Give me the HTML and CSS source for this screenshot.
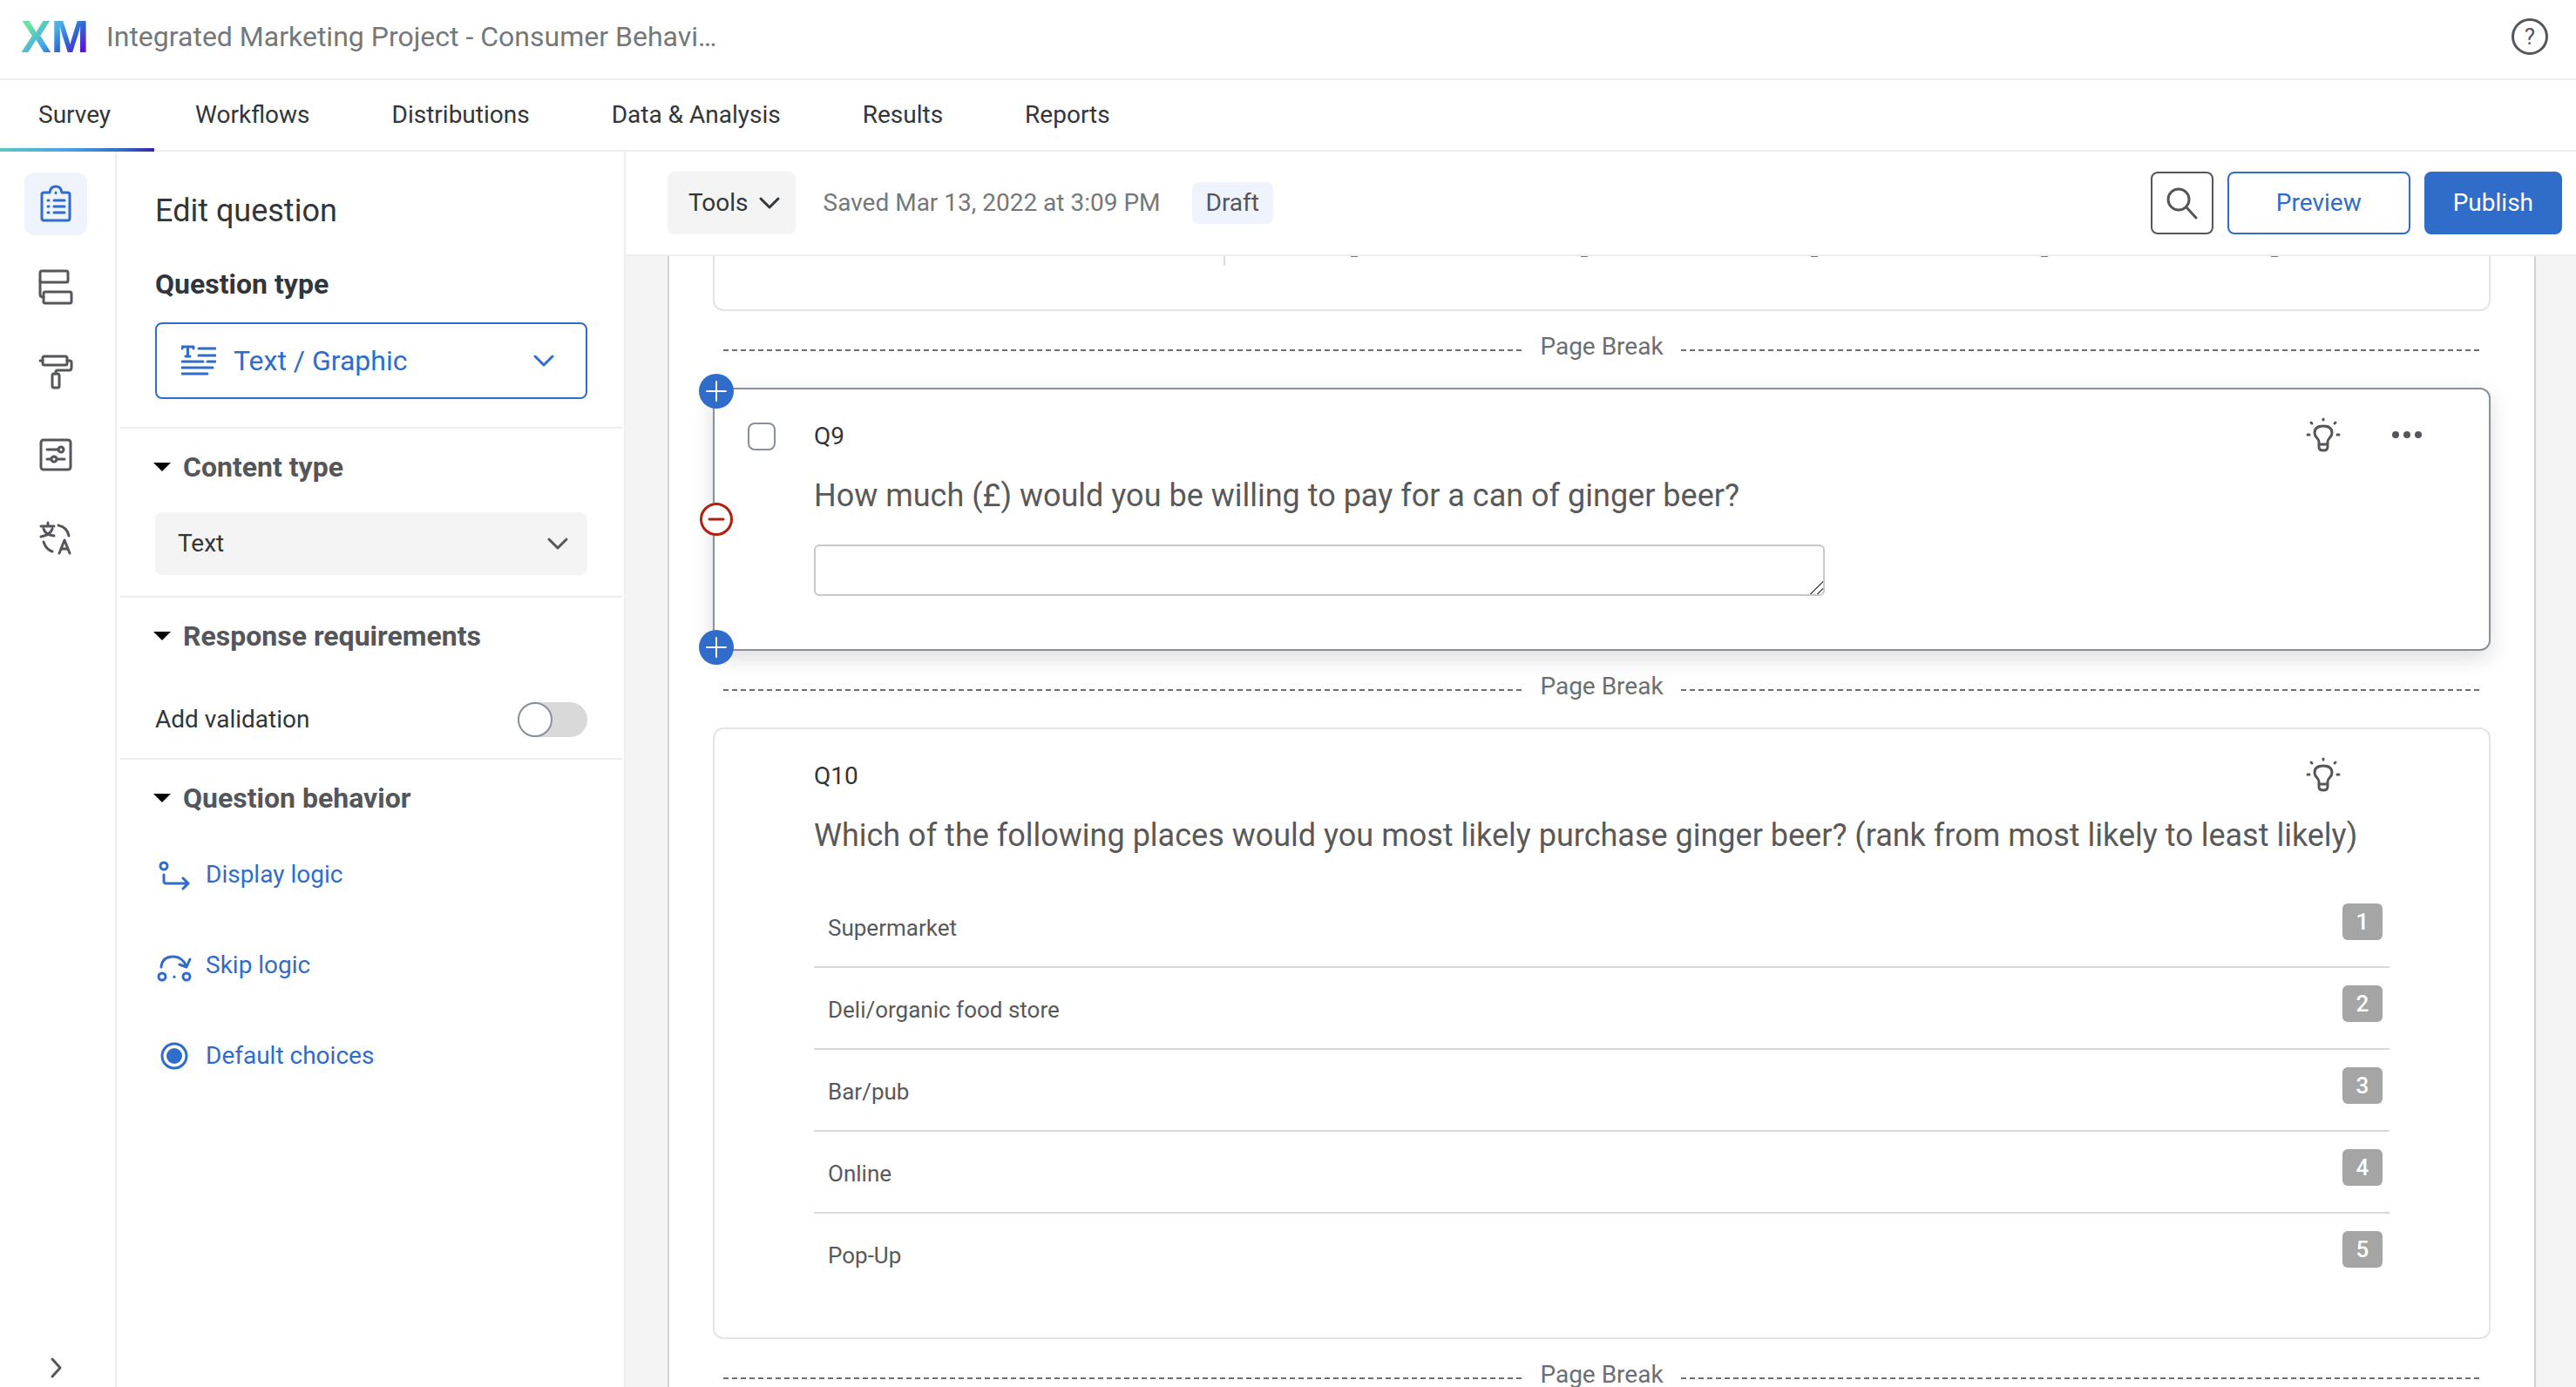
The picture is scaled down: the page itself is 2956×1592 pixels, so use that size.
FILE: index.html
```html
<!DOCTYPE html>
<html lang="en">
<head>
    <meta charset="utf-8">
    <title>Integrated Marketing Project - Survey</title>
    <link rel="stylesheet" href="styles.css">
</head>
<body>
    <header class="topbar">
        <span class="logo">XM</span>
        <h1 class="project-name">Integrated Marketing Project - Consumer Behavi…</h1>
        <button class="help-button" aria-label="Help">?</button>
    </header>

    <nav class="tabs">
        <a class="tab active" href="#">Survey</a>
        <a class="tab" href="#">Workflows</a>
        <a class="tab" href="#">Distributions</a>
        <a class="tab" href="#">Data &amp; Analysis</a>
        <a class="tab" href="#">Results</a>
        <a class="tab" href="#">Reports</a>
    </nav>

    <div class="workspace">
        <aside class="rail">
            <button class="rail-button selected" aria-label="Builder">
                <svg class="icon" width="44" height="44" viewBox="0 0 44 44">
                    <path d="M15 9H8.500Q6 9 6 11.500V38.500Q6 41 8.500 41H35.500Q38 41 38 38.500V11.500Q38 9 35.500 9H29Q28 2 22 2T15 9Z"/>
                    <path d="M20 18H32M20 25H32M20 32H32"/>
                    <path d="M13 18H14M13 25H14M13 32H14M22 9V9.500"/>
                </svg>
            </button>
            <button class="rail-button" aria-label="Survey flow">
                <svg class="icon" width="44" height="44" viewBox="0 0 44 44">
                    <rect x="4" y="3" width="32" height="13" rx="2"/>
                    <rect x="8" y="27" width="32" height="13" rx="2"/>
                    <path d="M4 14V30Q4 33 8 33"/>
                </svg>
            </button>
            <button class="rail-button" aria-label="Look and feel">
                <svg class="icon" width="44" height="44" viewBox="0 0 44 44">
                    <rect x="7" y="5" width="28" height="10" rx="2"/>
                    <path d="M4 10H7M35 10H38Q40 10 40 12V18Q40 21 37 21H24Q22 21 22 23V25"/>
                    <rect x="18" y="25" width="8" height="16" rx="2"/>
                </svg>
            </button>
            <button class="rail-button" aria-label="Survey options">
                <svg class="icon" width="44" height="44" viewBox="0 0 44 44">
                    <rect x="5" y="5" width="34" height="34" rx="3"/>
                    <path d="M12 16H25M12 27H16M24 27H32"/>
                    <circle cx="28" cy="16" r="3"/>
                    <circle cx="20" cy="27" r="3"/>
                </svg>
            </button>
            <button class="rail-button" aria-label="Translations">
                <svg class="icon" width="44" height="44" viewBox="0 0 44 44">
                    <path d="M13 4V8M5 8H20M8 11Q10 18 20 19M18 11Q16 18 5 20"/>
                    <path d="M25 7Q35 9 37 19M8 26Q11 35 18 37"/>
                    <path d="M26 39L32 24L38 39M28 34H36"/>
                </svg>
            </button>
            <button class="rail-button rail-expand" aria-label="Expand">
                <svg class="icon" width="44" height="44" viewBox="0 0 44 44">
                    <path d="M18 12L27 22L18 32"/>
                </svg>
            </button>
        </aside>

        <aside class="panel">
            <section class="panel-section panel-head">
                <h2 class="panel-title">Edit question</h2>
                <h3 class="panel-subtitle">Question type</h3>
                <button class="type-button">
                    <svg class="icon" width="40" height="40" viewBox="0 0 40 40">
                        <path d="M1 6V4H14V6M7.500 4V15M5 15H10M20 6H39M20 14H39M1 21H25M30 21H39M1 28H36M1 35H30"/>
                    </svg>
                    <span>Text / Graphic</span>
                    <svg class="icon chevron" width="24" height="16" viewBox="0 0 24 16">
                        <path d="M2 3L12 13L22 3"/>
                    </svg>
                </button>
            </section>

            <section class="panel-section">
                <h3 class="section-title">
                    <svg class="caret" width="20" height="10" viewBox="0 0 20 10"><path d="M0 0H20L10 10Z"/></svg>
                    <label for="content-type">Content type</label>
                </h3>
                <div class="select-wrap">
                    <select id="content-type" class="select">
                        <option>Text</option>
                    </select>
                    <svg class="icon select-chevron" width="24" height="16" viewBox="0 0 24 16">
                        <path d="M2 3L12 13L22 3"/>
                    </svg>
                </div>
            </section>

            <section class="panel-section">
                <h3 class="section-title">
                    <svg class="caret" width="20" height="10" viewBox="0 0 20 10"><path d="M0 0H20L10 10Z"/></svg>
                    Response requirements
                </h3>
                <div class="toggle-row">
                    <label for="validation">Add validation</label>
                    <input type="checkbox" id="validation" class="toggle">
                </div>
            </section>

            <section class="panel-section">
                <h3 class="section-title">
                    <svg class="caret" width="20" height="10" viewBox="0 0 20 10"><path d="M0 0H20L10 10Z"/></svg>
                    Question behavior
                </h3>
                <div class="behavior-links">
                    <a class="behavior-link" href="#">
                        <svg class="icon" width="44" height="44" viewBox="0 0 44 44">
                            <circle cx="10" cy="12" r="4"/>
                            <path d="M10 22V29Q10 32 13 32H38M32 26L38 32L32 38"/>
                        </svg>
                        Display logic
                    </a>
                    <a class="behavior-link" href="#">
                        <svg class="icon" width="44" height="44" viewBox="0 0 44 44">
                            <path d="M7 24Q8 12 21 12Q31 12 36 23M28 21L36 24L40 15"/>
                            <circle cx="8" cy="35" r="4"/>
                            <circle cx="36" cy="35" r="4"/>
                            <path d="M22 35V35.500"/>
                        </svg>
                        Skip logic
                    </a>
                    <a class="behavior-link" href="#">
                        <svg class="icon" width="44" height="44" viewBox="0 0 44 44">
                            <circle cx="22" cy="22" r="14"/>
                            <circle class="filled" cx="22" cy="22" r="9"/>
                        </svg>
                        Default choices
                    </a>
                </div>
            </section>
        </aside>

        <main class="editor">
            <div class="toolbar">
                <button class="tools-button">
                    Tools
                    <svg class="icon" width="24" height="16" viewBox="0 0 24 16">
                        <path d="M2 3L12 13L22 3"/>
                    </svg>
                </button>
                <span class="saved">Saved Mar 13, 2022 at 3:09 PM</span>
                <span class="status">Draft</span>
                <div class="toolbar-actions">
                    <button class="button search-button" aria-label="Search">
                        <svg class="icon" width="40" height="40" viewBox="0 0 40 40">
                            <circle cx="16" cy="16" r="12"/>
                            <path d="M25 25L36 37"/>
                        </svg>
                    </button>
                    <button class="button preview-button">Preview</button>
                    <button class="button publish-button">Publish</button>
                </div>
            </div>

            <div class="canvas">
                <div class="page">
                    <div class="question question-cut">
                        <div class="matrix-tail">
                            <span></span>
                            <span></span>
                            <span></span>
                            <span></span>
                            <span></span>
                        </div>
                    </div>

                    <div class="page-break">Page Break</div>

                    <div class="question current">
                        <button class="add-button add-before" aria-label="Add question before">
                            <svg width="40" height="40" viewBox="0 0 40 40"><path d="M20 9V31M9 20H31"/></svg>
                        </button>
                        <button class="remove-button" aria-label="Remove question">
                            <svg width="38" height="38" viewBox="0 0 38 38"><circle cx="19" cy="19" r="17.500"/><path d="M11 19H27"/></svg>
                        </button>
                        <button class="add-button add-after" aria-label="Add question after">
                            <svg width="40" height="40" viewBox="0 0 40 40"><path d="M20 9V31M9 20H31"/></svg>
                        </button>
                        <div class="question-head">
                            <span class="question-check"><input type="checkbox" id="q9-check" class="checkbox"></span>
                            <label class="question-id" for="q9-check">Q9</label>
                            <button class="head-button" aria-label="Suggestions">
                                <svg class="icon" width="40" height="40" viewBox="0 0 40 40">
                                    <path d="M15 29V26Q15 24 13 22Q10 19 10 16Q10 8 20 8T30 16Q30 19 27 22Q25 24 25 26V32Q25 36 20 36T15 32V29H25"/>
                                    <path d="M20 0V1M6 4L7 5M34 4L33 5M2 18L4 18M38 18L36 18"/>
                                </svg>
                            </button>
                            <button class="head-button" aria-label="More">
                                <svg class="dots" width="40" height="40" viewBox="0 0 40 40">
                                    <circle cx="7" cy="18" r="4"/><circle cx="20" cy="18" r="4"/><circle cx="33" cy="18" r="4"/>
                                </svg>
                            </button>
                        </div>
                        <div class="question-body">
                            <label class="question-text" for="q9-answer">How much (£) would you be willing to pay for a can of ginger beer?</label>
                            <textarea id="q9-answer" class="answer"></textarea>
                        </div>
                    </div>

                    <div class="page-break">Page Break</div>

                    <div class="question">
                        <div class="question-head">
                            <span class="question-check"></span>
                            <span class="question-id">Q10</span>
                            <button class="head-button" aria-label="Suggestions">
                                <svg class="icon" width="40" height="40" viewBox="0 0 40 40">
                                    <path d="M15 29V26Q15 24 13 22Q10 19 10 16Q10 8 20 8T30 16Q30 19 27 22Q25 24 25 26V32Q25 36 20 36T15 32V29H25"/>
                                    <path d="M20 0V1M6 4L7 5M34 4L33 5M2 18L4 18M38 18L36 18"/>
                                </svg>
                            </button>
                            <span class="head-button"></span>
                        </div>
                        <div class="question-body">
                            <p class="question-text">Which of the following places would you most likely purchase ginger beer? (rank from most likely to least likely)</p>
                            <ul class="rank-list">
                                <li class="rank-item"><span class="rank-label">Supermarket</span><span class="rank-number">1</span></li>
                                <li class="rank-item"><span class="rank-label">Deli/organic food store</span><span class="rank-number">2</span></li>
                                <li class="rank-item"><span class="rank-label">Bar/pub</span><span class="rank-number">3</span></li>
                                <li class="rank-item"><span class="rank-label">Online</span><span class="rank-number">4</span></li>
                                <li class="rank-item"><span class="rank-label">Pop-Up</span><span class="rank-number">5</span></li>
                            </ul>
                        </div>
                    </div>

                    <div class="page-break">Page Break</div>
                </div>
            </div>
        </main>
    </div>
</body>
</html>
```

FILE: styles.css
```css
*,
*::before,
*::after {
    box-sizing: border-box;
}
body {
    margin: 0;
    height: 100vh;
    display: flex;
    flex-direction: column;
    overflow: hidden;
    font-family: Roboto, "Liberation Sans", sans-serif;
    font-size: 28px;
    line-height: 40px;
    color: #32363a;
    background: #fff;
}
h1, h2, h3, p, ul {
    margin: 0;
    padding: 0;
}
button {
    font: inherit;
    color: inherit;
    background: none;
    border: none;
    padding: 0;
    cursor: pointer;
}
a {
    color: inherit;
    text-decoration: none;
}
svg {
    display: block;
    flex: none;
}
.icon {
    fill: none;
    stroke: currentColor;
    stroke-width: 3;
    stroke-linecap: round;
    stroke-linejoin: round;
}
.icon .filled {
    fill: currentColor;
    stroke: none;
}

/* header */
.topbar {
    flex: none;
    display: flex;
    align-items: center;
    height: 92px;
    padding: 0 32px 6px 24px;
    border-bottom: 2px solid #eee;
}
.logo {
    font-family: "Liberation Sans", sans-serif;
    font-size: 52px;
    font-weight: bold;
    background: linear-gradient(135deg, #6be0a0 15%, #48a9ea 45%, #2f6bd8 65%, #5a14d8 90%);
    -webkit-background-clip: text;
    background-clip: text;
    color: transparent;
}
.project-name {
    flex: 1;
    margin-left: 20px;
    font-size: 32px;
    font-weight: normal;
    color: #75787b;
}
.help-button {
    width: 42px;
    height: 42px;
    border: 3px solid #54565b;
    border-radius: 50%;
    font-size: 26px;
    line-height: 36px;
    color: #54565b;
}
.tabs {
    flex: none;
    display: flex;
    height: 82px;
    border-bottom: 2px solid #eee;
}
.tab {
    padding: 0 47px;
    line-height: 80px;
}
.tab:first-child {
    padding: 0 50px 0 44px;
}
.tab.active {
    height: 82px;
    background: linear-gradient(90deg, #5cc8c0, #4a9fe8 45%, #2f6bc9 80%, #3c22a8) no-repeat bottom / 100% 4px;
}

.workspace {
    flex: 1;
    min-height: 0;
    display: flex;
}

/* icon rail */
.rail {
    flex: none;
    display: flex;
    flex-direction: column;
    gap: 24px;
    width: 134px;
    padding: 24px 28px 0;
    border-right: 2px solid #eee;
    color: #54565b;
}
.rail-button {
    flex: none;
    display: flex;
    align-items: center;
    justify-content: center;
    width: 72px;
    height: 72px;
    border-radius: 12px;
}
.rail-button.selected {
    color: #306cca;
    background: #eef3fc;
}
.rail-expand {
    height: 44px;
    margin-top: auto;
}

/* question panel */
.panel {
    flex: none;
    width: 584px;
    padding: 0 2px 0 4px;
    border-right: 2px solid #eee;
}
.panel-section {
    padding: 24px 40px;
    border-bottom: 2px solid #eee;
}
.panel-section:last-child {
    border-bottom: none;
}
.panel-head {
    padding: 44px 40px 32px;
}
.panel-title {
    margin-bottom: 40px;
    font-size: 36px;
    line-height: 48px;
    font-weight: normal;
}
.panel-subtitle {
    margin-bottom: 24px;
    font-size: 32px;
}
.type-button {
    display: flex;
    align-items: center;
    gap: 20px;
    width: 100%;
    height: 88px;
    padding: 0 36px 0 28px;
    border: 2px solid #306cca;
    border-radius: 8px;
    font-size: 32px;
    color: #306cca;
}
.type-button .chevron {
    margin-left: auto;
}
.section-title {
    display: flex;
    align-items: center;
    gap: 14px;
    margin-left: -2px;
    font-size: 32px;
    color: #54565b;
}
.caret {
    fill: #000;
}
.select-wrap {
    position: relative;
    margin-top: 32px;
}
.select {
    display: block;
    width: 100%;
    height: 72px;
    padding: 0 26px;
    appearance: none;
    border: none;
    border-radius: 8px;
    background: #f4f4f4;
    font: inherit;
    color: inherit;
}
.select-chevron {
    position: absolute;
    right: 22px;
    top: 28px;
    color: #54565b;
    pointer-events: none;
}
.toggle-row {
    display: flex;
    align-items: center;
    justify-content: space-between;
    margin-top: 56px;
}
.toggle {
    appearance: none;
    width: 80px;
    height: 40px;
    margin: 0;
    border-radius: 20px;
    background: #d9d9d9;
}
.toggle::before {
    content: "";
    display: block;
    width: 40px;
    height: 40px;
    border: 2px solid #8a909b;
    border-radius: 50%;
    background: #fff;
}
.toggle:checked::before {
    margin-left: auto;
}
.behavior-links {
    display: flex;
    flex-direction: column;
    gap: 64px;
    margin-top: 48px;
}
.behavior-link {
    display: flex;
    align-items: center;
    gap: 14px;
    height: 40px;
    color: #306cca;
}

/* editor */
.editor {
    flex: 1;
    min-width: 0;
    display: flex;
    flex-direction: column;
}
.toolbar {
    flex: none;
    display: flex;
    align-items: center;
    height: 120px;
    padding: 0 16px 0 48px;
    border-bottom: 2px solid #eee;
}
.tools-button {
    display: flex;
    align-items: center;
    gap: 12px;
    height: 72px;
    padding: 0 18px 0 24px;
    border-radius: 8px;
    background: #f4f4f4;
}
.saved {
    margin-left: 32px;
    color: #75787b;
}
.status {
    margin-left: 36px;
    padding: 0 16px;
    border-radius: 8px;
    line-height: 48px;
    color: #54565b;
    background: #eef3fc;
}
.toolbar-actions {
    display: flex;
    gap: 16px;
    margin-left: auto;
}
.button {
    height: 72px;
    border: 2px solid #306cca;
    border-radius: 8px;
    color: #306cca;
}
.search-button {
    display: flex;
    align-items: center;
    justify-content: center;
    width: 72px;
    border-color: #54565b;
    color: #54565b;
}
.preview-button {
    padding: 0 54px;
}
.publish-button {
    padding: 0 31px;
    color: #fff;
    background: #306cca;
}
.canvas {
    flex: 1;
    min-height: 0;
    overflow: hidden;
    padding: 0 46px 0 48px;
    background: #f4f4f4;
}
.page {
    padding: 0 50px;
    border: solid #d0d0d0;
    border-width: 0 2px;
    background: #fff;
}
.question {
    position: relative;
    padding: 34px 58px 48px 38px;
    border: 2px solid #e4e4e4;
    border-radius: 12px;
}
.question.current {
    border-color: #8a909b;
    box-shadow: 0 8px 24px rgba(0, 0, 0, 0.14);
}
.question-cut {
    height: 63px;
    padding: 0 114px 0 584px;
    border-top: none;
    border-radius: 0 0 12px 12px;
}

/* end of the matrix columns above the fold */
.matrix-tail {
    display: flex;
    height: 11px;
    padding-left: 16px;
    border-left: 2px solid #ddd;
}
.matrix-tail span {
    flex: 1;
}
.matrix-tail span::before {
    content: "";
    display: block;
    width: 8px;
    height: 1px;
    margin: 0 auto;
    background: #777;
}

.page-break {
    display: flex;
    align-items: center;
    gap: 20px;
    height: 40px;
    margin: 21px 12px 27px;
    color: #6d6e71;
}
.page-break::before,
.page-break::after {
    content: "";
    flex: 1;
    height: 2px;
    margin-top: 8px;
    background: repeating-linear-gradient(90deg, #6d6e71 0, #6d6e71 6px, transparent 6px, transparent 10px);
}
.question-head {
    display: flex;
    align-items: center;
    height: 40px;
}
.question-check {
    width: 76px;
}
.checkbox {
    display: block;
    appearance: none;
    width: 32px;
    height: 32px;
    margin: 0;
    border: 2px solid #8a909b;
    border-radius: 8px;
}
.question-id {
    flex: 1;
}
.head-button {
    display: flex;
    justify-content: center;
    width: 72px;
    margin-left: 24px;
    color: #54565b;
}
.head-button svg {
    overflow: visible;
}
.dots {
    fill: currentColor;
}
.question-body {
    padding: 24px 56px 0 76px;
}
.question-text {
    display: block;
    font-size: 36px;
    line-height: 48px;
    color: #595959;
}
.answer {
    display: block;
    width: 1160px;
    max-width: 100%;
    height: 59px;
    margin: 32px 0 13px;
    border: 2px solid #c8c8c8;
    border-radius: 6px;
    font: inherit;
}
.answer::-webkit-resizer {
    background: linear-gradient(135deg, transparent 48%, #555 48%, #555 55%, transparent 55%, transparent 74%, #555 74%, #555 81%, transparent 81%);
}
.rank-list {
    margin-top: 34px;
    list-style: none;
}
.rank-item {
    display: flex;
    align-items: flex-start;
    justify-content: space-between;
    height: 94px;
    padding: 0 8px 0 16px;
    border-bottom: 2px solid #d9d9d9;
    font-size: 26px;
    color: #595959;
}
.rank-item:last-child {
    border-bottom: none;
}
.rank-label {
    margin-top: 28px;
}
.rank-number {
    width: 46px;
    height: 42px;
    margin-top: 20px;
    border-radius: 6px;
    line-height: 42px;
    text-align: center;
    font-weight: 500;
    color: #fff;
    background: #a5a5a5;
}
.add-button,
.remove-button {
    position: absolute;
    border-radius: 50%;
    fill: none;
    stroke-linecap: round;
}
.add-button {
    left: -18px;
    background: #306cca;
    stroke: #fff;
    stroke-width: 2;
}
.add-before {
    top: -18px;
}
.add-after {
    bottom: -18px;
}
.remove-button {
    left: -17px;
    top: 50%;
    margin-top: -19px;
    background: #fff;
    stroke: #b0200f;
    stroke-width: 3;
}
```
